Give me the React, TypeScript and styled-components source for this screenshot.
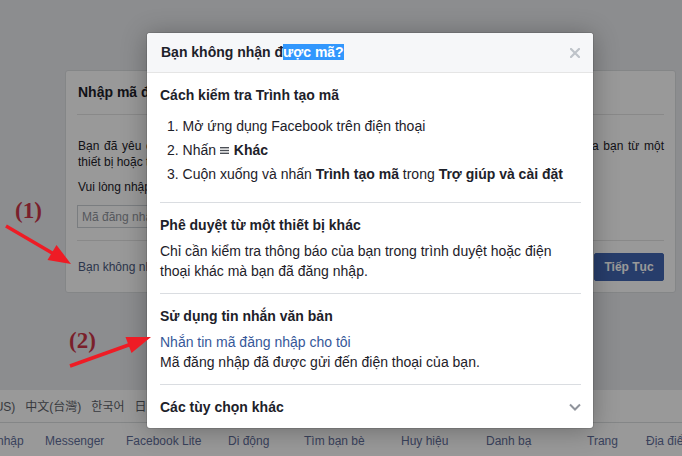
import React from 'react';
import styled, { createGlobalStyle } from 'styled-components';

const GlobalStyle = createGlobalStyle`
  html, body { margin: 0; padding: 0; }
  body {
    width: 682px;
    height: 456px;
    overflow: hidden;
    background: #e9ebee;
    font-family: "Liberation Sans", Arial, "Noto Sans CJK SC", "Noto Sans CJK KR", "Noto Sans CJK JP", sans-serif;
    color: #1d2129;
  }
`;

const Page = styled.div`
  position: relative;
  width: 682px;
  height: 456px;
  overflow: hidden;
`;

const Content = styled.main`
  padding-top: 70px;
`;

/* ---------- background card ---------- */
const Card = styled.section`
  box-sizing: border-box;
  width: 611px;
  margin-left: 65px;
  background: #fff;
  border: 1px solid #dddfe2;
  border-radius: 3px;
  padding: 0 11px;
`;

const CardTitle = styled.h2`
  margin: 0;
  padding: 12px 0 13px 1px;
  font-size: 14px;
  line-height: 18px;
  font-weight: bold;
  border-bottom: 1px solid #e5e5e5;
`;

const CardBody = styled.div`
  padding: 23px 0 12px 1px;
  border-bottom: 1px solid #e5e5e5;
  font-size: 12px;
  line-height: 16px;
`;

const Message = styled.p`
  margin: 0;
`;

const MessageLine = styled.span<{ $fill?: boolean }>`
  display: block;
  ${(p) => (p.$fill ? 'text-align: justify; text-align-last: justify;' : '')}
`;

const Prompt = styled.p`
  margin: 9px 0 10px;
`;

const CodeInput = styled.input`
  box-sizing: border-box;
  display: block;
  width: 230px;
  height: 23px;
  margin-left: -1px;
  border: 1px solid #ccd0d5;
  padding: 0 4px;
  font: 12px "Liberation Sans", Arial, sans-serif;
  color: #1d2129;
  &::placeholder { color: #90949c; }
`;

const CardFooter = styled.div`
  display: flex;
  align-items: center;
  justify-content: space-between;
  padding: 12px 0 11px 1px;
`;

const TextLink = styled.a`
  font-size: 12px;
  color: #4b5a80;
  text-decoration: none;
`;

const PrimaryButton = styled.button`
  box-sizing: border-box;
  width: 70px;
  height: 28px;
  padding: 0;
  border: 1px solid #4267b2;
  border-radius: 2px;
  background: #4267b2;
  color: #fff;
  font: bold 12px "Liberation Sans", Arial, sans-serif;
`;

/* ---------- page footer ---------- */
const Footer = styled.footer`
  margin-top: 97px;
  background: #fff;
  font-size: 12px;
  line-height: 16px;
`;

const LocaleList = styled.ul`
  list-style: none;
  margin: 0 0 0 -52px;
  padding: 9px 0 7px;
  display: flex;
  gap: 10px;
  white-space: nowrap;
  color: #5d6068;
  border-bottom: 1px solid #dddfe2;
`;

const LinkGrid = styled.div`
  display: grid;
  grid-template-columns: 70px 80px 81px 102px 76px 97px 85px 101px 59px 90px;
  row-gap: 6px;
  margin: 10px 0 0 -105px;
  white-space: nowrap;
  color: #5f6e9a;
`;

/* ---------- dialog ---------- */
const Overlay = styled.div`
  position: absolute;
  inset: 0;
  background: rgba(0, 0, 0, 0.4);
`;

const Dialog = styled.div`
  position: absolute;
  top: 33px;
  left: 147px;
  width: 446px;
  background: #fff;
  border-radius: 3px;
  overflow: hidden;
  box-shadow: 0 2px 26px rgba(0, 0, 0, 0.3), 0 0 0 1px rgba(0, 0, 0, 0.1);
`;

const DialogHeader = styled.header`
  display: flex;
  align-items: center;
  justify-content: space-between;
  height: 39px;
  padding: 0 13px 0 14px;
  background: #f6f7f9;
  border-bottom: 1px solid #e5e5e5;
`;

const DialogTitle = styled.h1`
  margin: 0;
  font-size: 14px;
  line-height: 19px;
  font-weight: bold;
  color: #1d2129;
`;

const Selected = styled.span`
  background: #3297fd;
  color: #fff;
`;

const CloseButton = styled.button`
  display: flex;
  padding: 0;
  border: 0;
  background: none;
`;

const DialogBody = styled.div`
  margin: 0 12px 0 13px;
`;

const Section = styled.section<{ $last?: boolean }>`
  padding: 13px 0 12px;
  border-bottom: ${(p) => (p.$last ? '0' : '1px solid #dadde1')};
`;

const SectionRow = styled.div`
  display: flex;
  align-items: center;
  justify-content: space-between;
`;

const SectionTitle = styled.h3`
  margin: 0;
  font-size: 14px;
  line-height: 18px;
  font-weight: bold;
`;

const Steps = styled.ol`
  margin: 10px 0 4px;
  padding: 0 0 0 7px;
  list-style: decimal inside;
  font-size: 14px;
  line-height: 24px;
`;

const Step = styled.li`
  white-space: nowrap;
`;

const MenuIcon = styled.svg`
  margin: 0 1px 0 0;
  vertical-align: 1px;
`;

const Para = styled.p`
  margin: 7px 0 0;
  font-size: 14px;
  line-height: 20px;
`;

const ParaLink = styled.a`
  display: block;
  margin-top: 7px;
  font-size: 14px;
  line-height: 20px;
  color: #365899;
  text-decoration: none;
`;

const Plain = styled.p`
  margin: 0;
  font-size: 14px;
  line-height: 20px;
`;

/* ---------- annotations ---------- */
const Annotations = styled.svg`
  position: absolute;
  left: 0;
  top: 0;
  pointer-events: none;
`;

const Marker = styled.span<{ $x: number; $y: number }>`
  position: absolute;
  left: ${(p) => p.$x}px;
  top: ${(p) => p.$y}px;
  font: bold 23px/23px "Liberation Serif", "Times New Roman", serif;
  color: #7a1f2b;
`;

const locales = [
  'English (US)', '中文(台灣)', '한국어', '日本語', 'Français (France)', 'Español',
  'Português (Brasil)', 'Deutsch', 'Italiano',
];

const links1 = [
  'Đăng ký', 'Đăng nhập', 'Messenger', 'Facebook Lite', 'Di động', 'Tìm bạn bè',
  'Huy hiệu', 'Danh bạ', 'Trang', 'Địa điểm',
];
const links2 = [
  'Trò chơi', 'Vị trí', 'Nhóm', 'Giới thiệu', 'Cookie', 'Tạo Trang',
  'Tuyển dụng', 'Điều khoản', 'Trợ giúp', 'Moments',
];

export default function App() {
  return (
    <Page>
      <GlobalStyle />
      <Content>
        <Card>
          <CardTitle>Nhập mã đăng nhập</CardTitle>
          <CardBody>
            <Message>
              <MessageLine $fill>
                Bạn đã yêu cầu chúng tôi hỏi mã đăng nhập khi có người cố gắng truy cập vào tài khoản của bạn từ một
              </MessageLine>
              <MessageLine>thiết bị hoặc trình duyệt mà chúng tôi không nhận ra.</MessageLine>
            </Message>
            <Prompt>Vui lòng nhập mã đăng nhập của bạn.</Prompt>
            <CodeInput placeholder="Mã đăng nhập" />
          </CardBody>
          <CardFooter>
            <TextLink href="#">Bạn không nhận được mã?</TextLink>
            <PrimaryButton>Tiếp Tục</PrimaryButton>
          </CardFooter>
        </Card>
        <Footer>
          <LocaleList>
            {locales.map((l) => (
              <li key={l}>{l}</li>
            ))}
          </LocaleList>
          <LinkGrid>
            {links1.map((l) => (
              <span key={l}>{l}</span>
            ))}
            {links2.map((l) => (
              <span key={l}>{l}</span>
            ))}
          </LinkGrid>
        </Footer>
      </Content>

      <Overlay />

      <Dialog>
        <DialogHeader>
          <DialogTitle>
            Bạn không nhận đ<Selected>ược mã?</Selected>
          </DialogTitle>
          <CloseButton aria-label="Đóng">
            <svg width="10" height="10" viewBox="0 0 10 10">
              <path d="M1 1L9 9M9 1L1 9" stroke="#bec3c9" strokeWidth="2.2" strokeLinecap="square" />
            </svg>
          </CloseButton>
        </DialogHeader>
        <DialogBody>
          <Section>
            <SectionTitle>Cách kiểm tra Trình tạo mã</SectionTitle>
            <Steps>
              <Step>Mở ứng dụng Facebook trên điện thoại</Step>
              <Step>
                Nhấn{' '}
                <MenuIcon width="9" height="7" viewBox="0 0 9 7">
                  <rect x="0" y="0" width="9" height="1.4" fill="#4b4f56" />
                  <rect x="0" y="2.8" width="9" height="1.4" fill="#4b4f56" />
                  <rect x="0" y="5.6" width="9" height="1.4" fill="#4b4f56" />
                </MenuIcon>{' '}
                <b>Khác</b>
              </Step>
              <Step>
                Cuộn xuống và nhấn <b>Trình tạo mã</b> trong <b>Trợ giúp và cài đặt</b>
              </Step>
            </Steps>
          </Section>
          <Section>
            <SectionTitle>Phê duyệt từ một thiết bị khác</SectionTitle>
            <Para>
              Chỉ cần kiểm tra thông báo của bạn trong trình duyệt hoặc điện thoại khác mà bạn đã đăng nhập.
            </Para>
          </Section>
          <Section>
            <SectionTitle>Sử dụng tin nhắn văn bản</SectionTitle>
            <ParaLink href="#">Nhắn tin mã đăng nhập cho tôi</ParaLink>
            <Plain>Mã đăng nhập đã được gửi đến điện thoại của bạn.</Plain>
          </Section>
          <Section $last>
            <SectionRow>
              <SectionTitle>Các tùy chọn khác</SectionTitle>
              <svg width="12" height="8" viewBox="0 0 12 8">
                <path d="M1 1.5L6 6.5L11 1.5" fill="none" stroke="#90949c" strokeWidth="2" />
              </svg>
            </SectionRow>
          </Section>
        </DialogBody>
      </Dialog>

      <Annotations width="682" height="456" viewBox="0 0 682 456">
        <line x1="6" y1="226" x2="53" y2="253.5" stroke="#ee1c25" strokeWidth="3.5" />
        <polygon points="71,264 47.5,260 56.5,245" fill="#ee1c25" />
        <line x1="70" y1="366" x2="130" y2="344.5" stroke="#ee1c25" strokeWidth="3.5" />
        <polygon points="151,337 131.5,353 125.5,337" fill="#ee1c25" />
      </Annotations>
      <Marker $x={15} $y={199}>(1)</Marker>
      <Marker $x={69} $y={329}>(2)</Marker>
    </Page>
  );
}
